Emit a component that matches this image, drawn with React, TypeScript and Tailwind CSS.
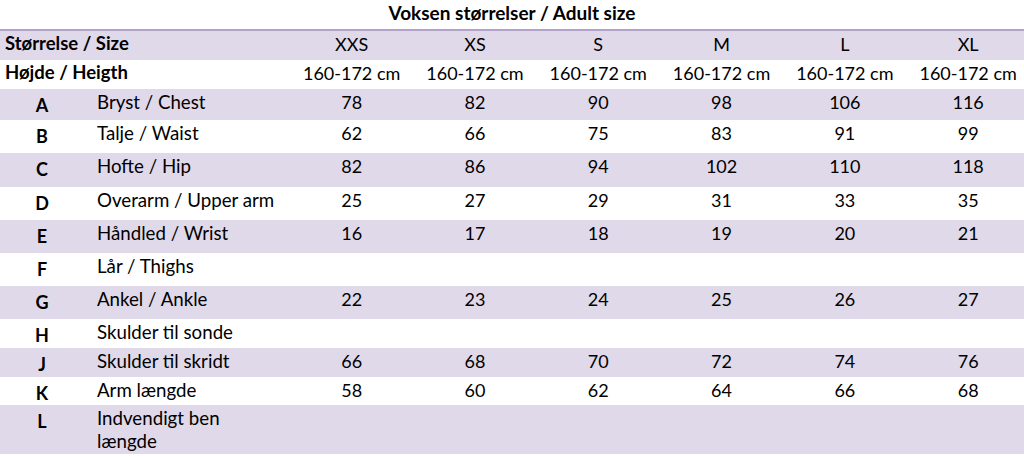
import React from "react";

type Row = {
  letter: string;
  label: React.ReactNode;
  values: number[];
  height: string;
  shaded: boolean;
};

const sizes = ["XXS", "XS", "S", "M", "L", "XL"];

const rows: Row[] = [
  { letter: "A", label: "Bryst / Chest", values: [78, 82, 90, 98, 106, 116], height: "h-[31px]", shaded: true },
  { letter: "B", label: "Talje / Waist", values: [62, 66, 75, 83, 91, 99], height: "h-[33px]", shaded: false },
  { letter: "C", label: "Hofte / Hip", values: [82, 86, 94, 102, 110, 118], height: "h-[34px]", shaded: true },
  { letter: "D", label: "Overarm / Upper arm", values: [25, 27, 29, 31, 33, 35], height: "h-[33px]", shaded: false },
  { letter: "E", label: "Håndled / Wrist", values: [16, 17, 18, 19, 20, 21], height: "h-[33px]", shaded: true },
  { letter: "F", label: "Lår / Thighs", values: [], height: "h-[33px]", shaded: false },
  { letter: "G", label: "Ankel / Ankle", values: [22, 23, 24, 25, 26, 27], height: "h-[33px]", shaded: true },
  { letter: "H", label: "Skulder til sonde", values: [], height: "h-[29px]", shaded: false },
  { letter: "J", label: "Skulder til skridt", values: [66, 68, 70, 72, 74, 76], height: "h-[29px]", shaded: true },
  { letter: "K", label: "Arm længde", values: [58, 60, 62, 64, 66, 68], height: "h-[28px]", shaded: false },
  {
    letter: "L",
    label: (
      <>
        Indvendigt ben
        <br />
        længde
      </>
    ),
    values: [],
    height: "h-[49px]",
    shaded: true,
  },
];

const grid = "grid grid-cols-[290px_repeat(6,123.3px)] items-start";

const SizeChart: React.FC = () => {
  return (
    <div className="w-[1024px] h-[456px] overflow-hidden bg-white text-black font-['Lato','Open_Sans',sans-serif] text-[18px] leading-[22px]">
      <div className="h-[29px] pt-[2px] text-center text-[19px] font-bold">Voksen størrelser / Adult size</div>
      <div className="w-[1030px] border-t-2 border-[#b3a3c9]">
        <div className={`${grid} h-[29px] bg-[#e0d9ea] pt-[1px]`}>
          <div className="pl-[5px] text-[18.5px] font-bold">Størrelse / Size</div>
          {sizes.map((s) => (
            <div key={s} className="text-center pt-[1px]">
              {s}
            </div>
          ))}
        </div>
        <div className={`${grid} h-[29px] bg-white pt-[1px]`}>
          <div className="pl-[5px] text-[18.5px] font-bold">Højde / Heigth</div>
          {sizes.map((s) => (
            <div key={s} className="text-center pt-[1px]">
              160-172 cm
            </div>
          ))}
        </div>
        {rows.map((row) => (
          <div
            key={row.letter}
            className={`${grid} ${row.height} pt-[2px] ${row.shaded ? "bg-[#e0d9ea]" : "bg-white"}`}
          >
            <div className="flex items-start">
              <div className="w-[84px] pt-[3px] text-center font-bold">{row.letter}</div>
              <div className={`ml-[13px] text-[18.7px] ${row.letter === "L" ? "leading-[23px]" : ""}`}>
                {row.label}
              </div>
            </div>
            {sizes.map((s, i) => (
              <div key={s} className="text-center">
                {row.values[i] ?? ""}
              </div>
            ))}
          </div>
        ))}
      </div>
    </div>
  );
};

export default function App() {
  return <SizeChart />;
}
